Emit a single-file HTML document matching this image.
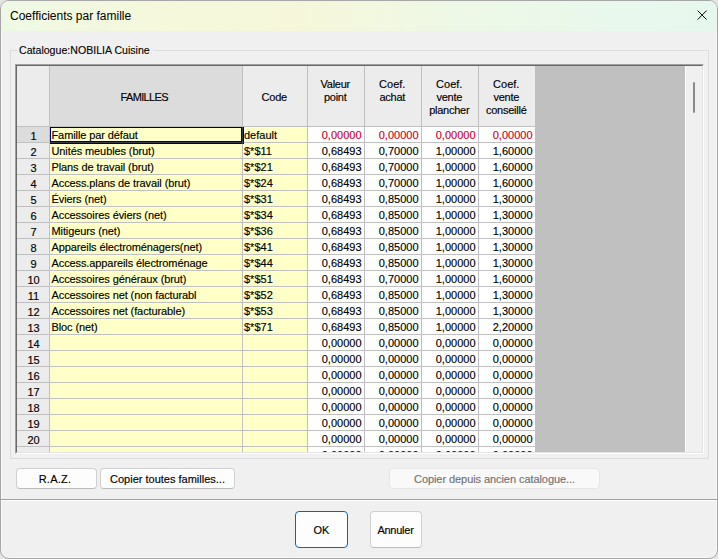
<!DOCTYPE html><html><head><meta charset="utf-8"><style>
*{margin:0;padding:0;box-sizing:border-box}
html,body{width:718px;height:559px;overflow:hidden;background:#e4e4e4}
body{font-family:"Liberation Sans",sans-serif;position:relative}
.a{position:absolute}
.win{left:0;top:0;width:718px;height:559px;border:1px solid #a6a6a6;border-radius:9px;background:#f0f0f0;overflow:hidden;box-shadow:inset 0 0 0 1px #f8f8f8}
.title{left:0;top:0;width:718px;height:30px;background:linear-gradient(90deg,#eef9e4 0%,#f5f8dc 21%,#f6f7da 42%,#eef8e6 63%,#e8f8ee 90%,#e6f7ee 100%)}
.t{white-space:nowrap;line-height:1;color:#000}
.cell{font-size:11px;-webkit-text-stroke:0.15px currentColor}
</style></head><body><div class="a win">
<div class="a title"></div>
</div>
<div class="a t" style="left:10px;top:10px;font-size:12px">Coefficients par famille</div>
<svg class="a" style="left:696px;top:9px" width="12" height="12" viewBox="0 0 12 12"><path d="M1.6 1.6L10.6 10.6M10.6 1.6L1.6 10.6" stroke="#000" stroke-width="1"/></svg>
<div class="a" style="left:10px;top:50px;width:699px;height:409px;border:1px solid #dcdcdc"></div>
<div class="a t" style="left:17px;top:45px;padding:0 3px 0 2px;background:#f0f0f0;font-size:10.6px;-webkit-text-stroke:0.12px #000">Catalogue:NOBILIA Cuisine</div>
<div class="a" style="left:15px;top:64px;width:689px;height:390px;border-left:1px solid #a0a0a0;border-top:1px solid #a0a0a0;border-right:1px solid #fff;border-bottom:1px solid #fff"></div>
<div class="a" style="left:16px;top:65px;width:687px;height:388px;border-left:1px solid #696969;border-top:1px solid #696969;border-right:1px solid #e3e3e3;border-bottom:1px solid #e3e3e3;background:#c0c0c0;overflow:hidden">
<div class="a" style="left:0px;top:0px;width:32px;height:60px;background:#ececec"></div>
<div class="a" style="left:32px;top:0px;width:1px;height:386px;background:#c0c0c0"></div>
<div class="a" style="left:33px;top:0px;width:192px;height:60px;background:#dcdcdc"></div>
<div class="a" style="left:225px;top:0px;width:1px;height:386px;background:#c0c0c0"></div>
<div class="a" style="left:226px;top:0px;width:64px;height:60px;background:#ececec"></div>
<div class="a" style="left:290px;top:0px;width:1px;height:386px;background:#c0c0c0"></div>
<div class="a" style="left:291px;top:0px;width:56px;height:60px;background:#ececec"></div>
<div class="a" style="left:347px;top:0px;width:1px;height:386px;background:#c0c0c0"></div>
<div class="a" style="left:348px;top:0px;width:56px;height:60px;background:#ececec"></div>
<div class="a" style="left:404px;top:0px;width:1px;height:386px;background:#c0c0c0"></div>
<div class="a" style="left:405px;top:0px;width:56px;height:60px;background:#ececec"></div>
<div class="a" style="left:461px;top:0px;width:1px;height:386px;background:#c0c0c0"></div>
<div class="a" style="left:462px;top:0px;width:56px;height:60px;background:#ececec"></div>
<div class="a" style="left:518px;top:0px;width:1px;height:386px;background:#c0c0c0"></div>
<div class="a" style="left:0px;top:60px;width:518px;height:1px;background:#c0c0c0"></div>
<div class="a" style="left:0px;top:61px;width:32px;height:15px;background:#dcdcdc"></div>
<div class="a" style="left:33px;top:61px;width:192px;height:15px;background:#ffffc8"></div>
<div class="a" style="left:226px;top:61px;width:64px;height:15px;background:#ffffc8"></div>
<div class="a" style="left:291px;top:61px;width:56px;height:15px;background:#ffffff"></div>
<div class="a" style="left:348px;top:61px;width:56px;height:15px;background:#ffffff"></div>
<div class="a" style="left:405px;top:61px;width:56px;height:15px;background:#ffffff"></div>
<div class="a" style="left:462px;top:61px;width:56px;height:15px;background:#ffffff"></div>
<div class="a" style="left:0px;top:76px;width:518px;height:1px;background:#c0c0c0"></div>
<div class="a" style="left:0px;top:77px;width:32px;height:15px;background:#ececec"></div>
<div class="a" style="left:33px;top:77px;width:192px;height:15px;background:#ffffc8"></div>
<div class="a" style="left:226px;top:77px;width:64px;height:15px;background:#ffffc8"></div>
<div class="a" style="left:291px;top:77px;width:56px;height:15px;background:#ffffff"></div>
<div class="a" style="left:348px;top:77px;width:56px;height:15px;background:#ffffff"></div>
<div class="a" style="left:405px;top:77px;width:56px;height:15px;background:#ffffff"></div>
<div class="a" style="left:462px;top:77px;width:56px;height:15px;background:#ffffff"></div>
<div class="a" style="left:0px;top:92px;width:518px;height:1px;background:#c0c0c0"></div>
<div class="a" style="left:0px;top:93px;width:32px;height:15px;background:#ececec"></div>
<div class="a" style="left:33px;top:93px;width:192px;height:15px;background:#ffffc8"></div>
<div class="a" style="left:226px;top:93px;width:64px;height:15px;background:#ffffc8"></div>
<div class="a" style="left:291px;top:93px;width:56px;height:15px;background:#ffffff"></div>
<div class="a" style="left:348px;top:93px;width:56px;height:15px;background:#ffffff"></div>
<div class="a" style="left:405px;top:93px;width:56px;height:15px;background:#ffffff"></div>
<div class="a" style="left:462px;top:93px;width:56px;height:15px;background:#ffffff"></div>
<div class="a" style="left:0px;top:108px;width:518px;height:1px;background:#c0c0c0"></div>
<div class="a" style="left:0px;top:109px;width:32px;height:15px;background:#ececec"></div>
<div class="a" style="left:33px;top:109px;width:192px;height:15px;background:#ffffc8"></div>
<div class="a" style="left:226px;top:109px;width:64px;height:15px;background:#ffffc8"></div>
<div class="a" style="left:291px;top:109px;width:56px;height:15px;background:#ffffff"></div>
<div class="a" style="left:348px;top:109px;width:56px;height:15px;background:#ffffff"></div>
<div class="a" style="left:405px;top:109px;width:56px;height:15px;background:#ffffff"></div>
<div class="a" style="left:462px;top:109px;width:56px;height:15px;background:#ffffff"></div>
<div class="a" style="left:0px;top:124px;width:518px;height:1px;background:#c0c0c0"></div>
<div class="a" style="left:0px;top:125px;width:32px;height:15px;background:#ececec"></div>
<div class="a" style="left:33px;top:125px;width:192px;height:15px;background:#ffffc8"></div>
<div class="a" style="left:226px;top:125px;width:64px;height:15px;background:#ffffc8"></div>
<div class="a" style="left:291px;top:125px;width:56px;height:15px;background:#ffffff"></div>
<div class="a" style="left:348px;top:125px;width:56px;height:15px;background:#ffffff"></div>
<div class="a" style="left:405px;top:125px;width:56px;height:15px;background:#ffffff"></div>
<div class="a" style="left:462px;top:125px;width:56px;height:15px;background:#ffffff"></div>
<div class="a" style="left:0px;top:140px;width:518px;height:1px;background:#c0c0c0"></div>
<div class="a" style="left:0px;top:141px;width:32px;height:15px;background:#ececec"></div>
<div class="a" style="left:33px;top:141px;width:192px;height:15px;background:#ffffc8"></div>
<div class="a" style="left:226px;top:141px;width:64px;height:15px;background:#ffffc8"></div>
<div class="a" style="left:291px;top:141px;width:56px;height:15px;background:#ffffff"></div>
<div class="a" style="left:348px;top:141px;width:56px;height:15px;background:#ffffff"></div>
<div class="a" style="left:405px;top:141px;width:56px;height:15px;background:#ffffff"></div>
<div class="a" style="left:462px;top:141px;width:56px;height:15px;background:#ffffff"></div>
<div class="a" style="left:0px;top:156px;width:518px;height:1px;background:#c0c0c0"></div>
<div class="a" style="left:0px;top:157px;width:32px;height:15px;background:#ececec"></div>
<div class="a" style="left:33px;top:157px;width:192px;height:15px;background:#ffffc8"></div>
<div class="a" style="left:226px;top:157px;width:64px;height:15px;background:#ffffc8"></div>
<div class="a" style="left:291px;top:157px;width:56px;height:15px;background:#ffffff"></div>
<div class="a" style="left:348px;top:157px;width:56px;height:15px;background:#ffffff"></div>
<div class="a" style="left:405px;top:157px;width:56px;height:15px;background:#ffffff"></div>
<div class="a" style="left:462px;top:157px;width:56px;height:15px;background:#ffffff"></div>
<div class="a" style="left:0px;top:172px;width:518px;height:1px;background:#c0c0c0"></div>
<div class="a" style="left:0px;top:173px;width:32px;height:15px;background:#ececec"></div>
<div class="a" style="left:33px;top:173px;width:192px;height:15px;background:#ffffc8"></div>
<div class="a" style="left:226px;top:173px;width:64px;height:15px;background:#ffffc8"></div>
<div class="a" style="left:291px;top:173px;width:56px;height:15px;background:#ffffff"></div>
<div class="a" style="left:348px;top:173px;width:56px;height:15px;background:#ffffff"></div>
<div class="a" style="left:405px;top:173px;width:56px;height:15px;background:#ffffff"></div>
<div class="a" style="left:462px;top:173px;width:56px;height:15px;background:#ffffff"></div>
<div class="a" style="left:0px;top:188px;width:518px;height:1px;background:#c0c0c0"></div>
<div class="a" style="left:0px;top:189px;width:32px;height:15px;background:#ececec"></div>
<div class="a" style="left:33px;top:189px;width:192px;height:15px;background:#ffffc8"></div>
<div class="a" style="left:226px;top:189px;width:64px;height:15px;background:#ffffc8"></div>
<div class="a" style="left:291px;top:189px;width:56px;height:15px;background:#ffffff"></div>
<div class="a" style="left:348px;top:189px;width:56px;height:15px;background:#ffffff"></div>
<div class="a" style="left:405px;top:189px;width:56px;height:15px;background:#ffffff"></div>
<div class="a" style="left:462px;top:189px;width:56px;height:15px;background:#ffffff"></div>
<div class="a" style="left:0px;top:204px;width:518px;height:1px;background:#c0c0c0"></div>
<div class="a" style="left:0px;top:205px;width:32px;height:15px;background:#ececec"></div>
<div class="a" style="left:33px;top:205px;width:192px;height:15px;background:#ffffc8"></div>
<div class="a" style="left:226px;top:205px;width:64px;height:15px;background:#ffffc8"></div>
<div class="a" style="left:291px;top:205px;width:56px;height:15px;background:#ffffff"></div>
<div class="a" style="left:348px;top:205px;width:56px;height:15px;background:#ffffff"></div>
<div class="a" style="left:405px;top:205px;width:56px;height:15px;background:#ffffff"></div>
<div class="a" style="left:462px;top:205px;width:56px;height:15px;background:#ffffff"></div>
<div class="a" style="left:0px;top:220px;width:518px;height:1px;background:#c0c0c0"></div>
<div class="a" style="left:0px;top:221px;width:32px;height:15px;background:#ececec"></div>
<div class="a" style="left:33px;top:221px;width:192px;height:15px;background:#ffffc8"></div>
<div class="a" style="left:226px;top:221px;width:64px;height:15px;background:#ffffc8"></div>
<div class="a" style="left:291px;top:221px;width:56px;height:15px;background:#ffffff"></div>
<div class="a" style="left:348px;top:221px;width:56px;height:15px;background:#ffffff"></div>
<div class="a" style="left:405px;top:221px;width:56px;height:15px;background:#ffffff"></div>
<div class="a" style="left:462px;top:221px;width:56px;height:15px;background:#ffffff"></div>
<div class="a" style="left:0px;top:236px;width:518px;height:1px;background:#c0c0c0"></div>
<div class="a" style="left:0px;top:237px;width:32px;height:15px;background:#ececec"></div>
<div class="a" style="left:33px;top:237px;width:192px;height:15px;background:#ffffc8"></div>
<div class="a" style="left:226px;top:237px;width:64px;height:15px;background:#ffffc8"></div>
<div class="a" style="left:291px;top:237px;width:56px;height:15px;background:#ffffff"></div>
<div class="a" style="left:348px;top:237px;width:56px;height:15px;background:#ffffff"></div>
<div class="a" style="left:405px;top:237px;width:56px;height:15px;background:#ffffff"></div>
<div class="a" style="left:462px;top:237px;width:56px;height:15px;background:#ffffff"></div>
<div class="a" style="left:0px;top:252px;width:518px;height:1px;background:#c0c0c0"></div>
<div class="a" style="left:0px;top:253px;width:32px;height:15px;background:#ececec"></div>
<div class="a" style="left:33px;top:253px;width:192px;height:15px;background:#ffffc8"></div>
<div class="a" style="left:226px;top:253px;width:64px;height:15px;background:#ffffc8"></div>
<div class="a" style="left:291px;top:253px;width:56px;height:15px;background:#ffffff"></div>
<div class="a" style="left:348px;top:253px;width:56px;height:15px;background:#ffffff"></div>
<div class="a" style="left:405px;top:253px;width:56px;height:15px;background:#ffffff"></div>
<div class="a" style="left:462px;top:253px;width:56px;height:15px;background:#ffffff"></div>
<div class="a" style="left:0px;top:268px;width:518px;height:1px;background:#c0c0c0"></div>
<div class="a" style="left:0px;top:269px;width:32px;height:15px;background:#ececec"></div>
<div class="a" style="left:33px;top:269px;width:192px;height:15px;background:#ffffc8"></div>
<div class="a" style="left:226px;top:269px;width:64px;height:15px;background:#ffffc8"></div>
<div class="a" style="left:291px;top:269px;width:56px;height:15px;background:#ffffff"></div>
<div class="a" style="left:348px;top:269px;width:56px;height:15px;background:#ffffff"></div>
<div class="a" style="left:405px;top:269px;width:56px;height:15px;background:#ffffff"></div>
<div class="a" style="left:462px;top:269px;width:56px;height:15px;background:#ffffff"></div>
<div class="a" style="left:0px;top:284px;width:518px;height:1px;background:#c0c0c0"></div>
<div class="a" style="left:0px;top:285px;width:32px;height:15px;background:#ececec"></div>
<div class="a" style="left:33px;top:285px;width:192px;height:15px;background:#ffffc8"></div>
<div class="a" style="left:226px;top:285px;width:64px;height:15px;background:#ffffc8"></div>
<div class="a" style="left:291px;top:285px;width:56px;height:15px;background:#ffffff"></div>
<div class="a" style="left:348px;top:285px;width:56px;height:15px;background:#ffffff"></div>
<div class="a" style="left:405px;top:285px;width:56px;height:15px;background:#ffffff"></div>
<div class="a" style="left:462px;top:285px;width:56px;height:15px;background:#ffffff"></div>
<div class="a" style="left:0px;top:300px;width:518px;height:1px;background:#c0c0c0"></div>
<div class="a" style="left:0px;top:301px;width:32px;height:15px;background:#ececec"></div>
<div class="a" style="left:33px;top:301px;width:192px;height:15px;background:#ffffc8"></div>
<div class="a" style="left:226px;top:301px;width:64px;height:15px;background:#ffffc8"></div>
<div class="a" style="left:291px;top:301px;width:56px;height:15px;background:#ffffff"></div>
<div class="a" style="left:348px;top:301px;width:56px;height:15px;background:#ffffff"></div>
<div class="a" style="left:405px;top:301px;width:56px;height:15px;background:#ffffff"></div>
<div class="a" style="left:462px;top:301px;width:56px;height:15px;background:#ffffff"></div>
<div class="a" style="left:0px;top:316px;width:518px;height:1px;background:#c0c0c0"></div>
<div class="a" style="left:0px;top:317px;width:32px;height:15px;background:#ececec"></div>
<div class="a" style="left:33px;top:317px;width:192px;height:15px;background:#ffffc8"></div>
<div class="a" style="left:226px;top:317px;width:64px;height:15px;background:#ffffc8"></div>
<div class="a" style="left:291px;top:317px;width:56px;height:15px;background:#ffffff"></div>
<div class="a" style="left:348px;top:317px;width:56px;height:15px;background:#ffffff"></div>
<div class="a" style="left:405px;top:317px;width:56px;height:15px;background:#ffffff"></div>
<div class="a" style="left:462px;top:317px;width:56px;height:15px;background:#ffffff"></div>
<div class="a" style="left:0px;top:332px;width:518px;height:1px;background:#c0c0c0"></div>
<div class="a" style="left:0px;top:333px;width:32px;height:15px;background:#ececec"></div>
<div class="a" style="left:33px;top:333px;width:192px;height:15px;background:#ffffc8"></div>
<div class="a" style="left:226px;top:333px;width:64px;height:15px;background:#ffffc8"></div>
<div class="a" style="left:291px;top:333px;width:56px;height:15px;background:#ffffff"></div>
<div class="a" style="left:348px;top:333px;width:56px;height:15px;background:#ffffff"></div>
<div class="a" style="left:405px;top:333px;width:56px;height:15px;background:#ffffff"></div>
<div class="a" style="left:462px;top:333px;width:56px;height:15px;background:#ffffff"></div>
<div class="a" style="left:0px;top:348px;width:518px;height:1px;background:#c0c0c0"></div>
<div class="a" style="left:0px;top:349px;width:32px;height:15px;background:#ececec"></div>
<div class="a" style="left:33px;top:349px;width:192px;height:15px;background:#ffffc8"></div>
<div class="a" style="left:226px;top:349px;width:64px;height:15px;background:#ffffc8"></div>
<div class="a" style="left:291px;top:349px;width:56px;height:15px;background:#ffffff"></div>
<div class="a" style="left:348px;top:349px;width:56px;height:15px;background:#ffffff"></div>
<div class="a" style="left:405px;top:349px;width:56px;height:15px;background:#ffffff"></div>
<div class="a" style="left:462px;top:349px;width:56px;height:15px;background:#ffffff"></div>
<div class="a" style="left:0px;top:364px;width:518px;height:1px;background:#c0c0c0"></div>
<div class="a" style="left:0px;top:365px;width:32px;height:15px;background:#ececec"></div>
<div class="a" style="left:33px;top:365px;width:192px;height:15px;background:#ffffc8"></div>
<div class="a" style="left:226px;top:365px;width:64px;height:15px;background:#ffffc8"></div>
<div class="a" style="left:291px;top:365px;width:56px;height:15px;background:#ffffff"></div>
<div class="a" style="left:348px;top:365px;width:56px;height:15px;background:#ffffff"></div>
<div class="a" style="left:405px;top:365px;width:56px;height:15px;background:#ffffff"></div>
<div class="a" style="left:462px;top:365px;width:56px;height:15px;background:#ffffff"></div>
<div class="a" style="left:0px;top:380px;width:518px;height:1px;background:#c0c0c0"></div>
<div class="a" style="left:0px;top:381px;width:32px;height:15px;background:#ececec"></div>
<div class="a" style="left:33px;top:381px;width:192px;height:15px;background:#ffffc8"></div>
<div class="a" style="left:226px;top:381px;width:64px;height:15px;background:#ffffc8"></div>
<div class="a" style="left:291px;top:381px;width:56px;height:15px;background:#ffffff"></div>
<div class="a" style="left:348px;top:381px;width:56px;height:15px;background:#ffffff"></div>
<div class="a" style="left:405px;top:381px;width:56px;height:15px;background:#ffffff"></div>
<div class="a" style="left:462px;top:381px;width:56px;height:15px;background:#ffffff"></div>
<div class="a" style="left:0px;top:396px;width:518px;height:1px;background:#c0c0c0"></div>
<div class="a t cell" style="left:0.5px;width:32px;text-align:center;top:65px">1</div>
<div class="a t cell" style="left:34.5px;top:64px;letter-spacing:-0.1px">Famille par défaut</div>
<div class="a t cell" style="left:227px;top:64px;">default</div>
<div class="a t cell" style="left:291px;width:53.5px;text-align:right;top:64px;color:#c8002a">0,00000</div>
<div class="a t cell" style="left:348px;width:53.5px;text-align:right;top:64px;color:#c8002a">0,00000</div>
<div class="a t cell" style="left:405px;width:53.5px;text-align:right;top:64px;color:#c8002a">0,00000</div>
<div class="a t cell" style="left:462px;width:53.5px;text-align:right;top:64px;color:#c8002a">0,00000</div>
<div class="a t cell" style="left:0.5px;width:32px;text-align:center;top:81px">2</div>
<div class="a t cell" style="left:34.5px;top:80px;letter-spacing:-0.1px">Unités meubles (brut)</div>
<div class="a t cell" style="left:227px;top:80px;">$*$11</div>
<div class="a t cell" style="left:291px;width:53.5px;text-align:right;top:80px;color:#000">0,68493</div>
<div class="a t cell" style="left:348px;width:53.5px;text-align:right;top:80px;color:#000">0,70000</div>
<div class="a t cell" style="left:405px;width:53.5px;text-align:right;top:80px;color:#000">1,00000</div>
<div class="a t cell" style="left:462px;width:53.5px;text-align:right;top:80px;color:#000">1,60000</div>
<div class="a t cell" style="left:0.5px;width:32px;text-align:center;top:97px">3</div>
<div class="a t cell" style="left:34.5px;top:96px;letter-spacing:-0.1px">Plans de travail (brut)</div>
<div class="a t cell" style="left:227px;top:96px;">$*$21</div>
<div class="a t cell" style="left:291px;width:53.5px;text-align:right;top:96px;color:#000">0,68493</div>
<div class="a t cell" style="left:348px;width:53.5px;text-align:right;top:96px;color:#000">0,70000</div>
<div class="a t cell" style="left:405px;width:53.5px;text-align:right;top:96px;color:#000">1,00000</div>
<div class="a t cell" style="left:462px;width:53.5px;text-align:right;top:96px;color:#000">1,60000</div>
<div class="a t cell" style="left:0.5px;width:32px;text-align:center;top:113px">4</div>
<div class="a t cell" style="left:34.5px;top:112px;letter-spacing:-0.1px">Access.plans de travail (brut)</div>
<div class="a t cell" style="left:227px;top:112px;">$*$24</div>
<div class="a t cell" style="left:291px;width:53.5px;text-align:right;top:112px;color:#000">0,68493</div>
<div class="a t cell" style="left:348px;width:53.5px;text-align:right;top:112px;color:#000">0,70000</div>
<div class="a t cell" style="left:405px;width:53.5px;text-align:right;top:112px;color:#000">1,00000</div>
<div class="a t cell" style="left:462px;width:53.5px;text-align:right;top:112px;color:#000">1,60000</div>
<div class="a t cell" style="left:0.5px;width:32px;text-align:center;top:129px">5</div>
<div class="a t cell" style="left:34.5px;top:128px;letter-spacing:-0.1px">Éviers (net)</div>
<div class="a t cell" style="left:227px;top:128px;">$*$31</div>
<div class="a t cell" style="left:291px;width:53.5px;text-align:right;top:128px;color:#000">0,68493</div>
<div class="a t cell" style="left:348px;width:53.5px;text-align:right;top:128px;color:#000">0,85000</div>
<div class="a t cell" style="left:405px;width:53.5px;text-align:right;top:128px;color:#000">1,00000</div>
<div class="a t cell" style="left:462px;width:53.5px;text-align:right;top:128px;color:#000">1,30000</div>
<div class="a t cell" style="left:0.5px;width:32px;text-align:center;top:145px">6</div>
<div class="a t cell" style="left:34.5px;top:144px;letter-spacing:-0.1px">Accessoires éviers (net)</div>
<div class="a t cell" style="left:227px;top:144px;">$*$34</div>
<div class="a t cell" style="left:291px;width:53.5px;text-align:right;top:144px;color:#000">0,68493</div>
<div class="a t cell" style="left:348px;width:53.5px;text-align:right;top:144px;color:#000">0,85000</div>
<div class="a t cell" style="left:405px;width:53.5px;text-align:right;top:144px;color:#000">1,00000</div>
<div class="a t cell" style="left:462px;width:53.5px;text-align:right;top:144px;color:#000">1,30000</div>
<div class="a t cell" style="left:0.5px;width:32px;text-align:center;top:161px">7</div>
<div class="a t cell" style="left:34.5px;top:160px;letter-spacing:-0.1px">Mitigeurs (net)</div>
<div class="a t cell" style="left:227px;top:160px;">$*$36</div>
<div class="a t cell" style="left:291px;width:53.5px;text-align:right;top:160px;color:#000">0,68493</div>
<div class="a t cell" style="left:348px;width:53.5px;text-align:right;top:160px;color:#000">0,85000</div>
<div class="a t cell" style="left:405px;width:53.5px;text-align:right;top:160px;color:#000">1,00000</div>
<div class="a t cell" style="left:462px;width:53.5px;text-align:right;top:160px;color:#000">1,30000</div>
<div class="a t cell" style="left:0.5px;width:32px;text-align:center;top:177px">8</div>
<div class="a t cell" style="left:34.5px;top:176px;letter-spacing:-0.1px">Appareils électroménagers(net)</div>
<div class="a t cell" style="left:227px;top:176px;">$*$41</div>
<div class="a t cell" style="left:291px;width:53.5px;text-align:right;top:176px;color:#000">0,68493</div>
<div class="a t cell" style="left:348px;width:53.5px;text-align:right;top:176px;color:#000">0,85000</div>
<div class="a t cell" style="left:405px;width:53.5px;text-align:right;top:176px;color:#000">1,00000</div>
<div class="a t cell" style="left:462px;width:53.5px;text-align:right;top:176px;color:#000">1,30000</div>
<div class="a t cell" style="left:0.5px;width:32px;text-align:center;top:193px">9</div>
<div class="a t cell" style="left:34.5px;top:192px;letter-spacing:-0.1px">Access.appareils électroménage</div>
<div class="a t cell" style="left:227px;top:192px;">$*$44</div>
<div class="a t cell" style="left:291px;width:53.5px;text-align:right;top:192px;color:#000">0,68493</div>
<div class="a t cell" style="left:348px;width:53.5px;text-align:right;top:192px;color:#000">0,85000</div>
<div class="a t cell" style="left:405px;width:53.5px;text-align:right;top:192px;color:#000">1,00000</div>
<div class="a t cell" style="left:462px;width:53.5px;text-align:right;top:192px;color:#000">1,30000</div>
<div class="a t cell" style="left:0.5px;width:32px;text-align:center;top:209px">10</div>
<div class="a t cell" style="left:34.5px;top:208px;letter-spacing:-0.1px">Accessoires généraux (brut)</div>
<div class="a t cell" style="left:227px;top:208px;">$*$51</div>
<div class="a t cell" style="left:291px;width:53.5px;text-align:right;top:208px;color:#000">0,68493</div>
<div class="a t cell" style="left:348px;width:53.5px;text-align:right;top:208px;color:#000">0,70000</div>
<div class="a t cell" style="left:405px;width:53.5px;text-align:right;top:208px;color:#000">1,00000</div>
<div class="a t cell" style="left:462px;width:53.5px;text-align:right;top:208px;color:#000">1,60000</div>
<div class="a t cell" style="left:0.5px;width:32px;text-align:center;top:225px">11</div>
<div class="a t cell" style="left:34.5px;top:224px;letter-spacing:-0.1px">Accessoires net (non facturabl</div>
<div class="a t cell" style="left:227px;top:224px;">$*$52</div>
<div class="a t cell" style="left:291px;width:53.5px;text-align:right;top:224px;color:#000">0,68493</div>
<div class="a t cell" style="left:348px;width:53.5px;text-align:right;top:224px;color:#000">0,85000</div>
<div class="a t cell" style="left:405px;width:53.5px;text-align:right;top:224px;color:#000">1,00000</div>
<div class="a t cell" style="left:462px;width:53.5px;text-align:right;top:224px;color:#000">1,30000</div>
<div class="a t cell" style="left:0.5px;width:32px;text-align:center;top:241px">12</div>
<div class="a t cell" style="left:34.5px;top:240px;letter-spacing:-0.1px">Accessoires net (facturable)</div>
<div class="a t cell" style="left:227px;top:240px;">$*$53</div>
<div class="a t cell" style="left:291px;width:53.5px;text-align:right;top:240px;color:#000">0,68493</div>
<div class="a t cell" style="left:348px;width:53.5px;text-align:right;top:240px;color:#000">0,85000</div>
<div class="a t cell" style="left:405px;width:53.5px;text-align:right;top:240px;color:#000">1,00000</div>
<div class="a t cell" style="left:462px;width:53.5px;text-align:right;top:240px;color:#000">1,30000</div>
<div class="a t cell" style="left:0.5px;width:32px;text-align:center;top:257px">13</div>
<div class="a t cell" style="left:34.5px;top:256px;letter-spacing:-0.1px">Bloc (net)</div>
<div class="a t cell" style="left:227px;top:256px;">$*$71</div>
<div class="a t cell" style="left:291px;width:53.5px;text-align:right;top:256px;color:#000">0,68493</div>
<div class="a t cell" style="left:348px;width:53.5px;text-align:right;top:256px;color:#000">0,85000</div>
<div class="a t cell" style="left:405px;width:53.5px;text-align:right;top:256px;color:#000">1,00000</div>
<div class="a t cell" style="left:462px;width:53.5px;text-align:right;top:256px;color:#000">2,20000</div>
<div class="a t cell" style="left:0.5px;width:32px;text-align:center;top:273px">14</div>
<div class="a t cell" style="left:291px;width:53.5px;text-align:right;top:272px;color:#000">0,00000</div>
<div class="a t cell" style="left:348px;width:53.5px;text-align:right;top:272px;color:#000">0,00000</div>
<div class="a t cell" style="left:405px;width:53.5px;text-align:right;top:272px;color:#000">0,00000</div>
<div class="a t cell" style="left:462px;width:53.5px;text-align:right;top:272px;color:#000">0,00000</div>
<div class="a t cell" style="left:0.5px;width:32px;text-align:center;top:289px">15</div>
<div class="a t cell" style="left:291px;width:53.5px;text-align:right;top:288px;color:#000">0,00000</div>
<div class="a t cell" style="left:348px;width:53.5px;text-align:right;top:288px;color:#000">0,00000</div>
<div class="a t cell" style="left:405px;width:53.5px;text-align:right;top:288px;color:#000">0,00000</div>
<div class="a t cell" style="left:462px;width:53.5px;text-align:right;top:288px;color:#000">0,00000</div>
<div class="a t cell" style="left:0.5px;width:32px;text-align:center;top:305px">16</div>
<div class="a t cell" style="left:291px;width:53.5px;text-align:right;top:304px;color:#000">0,00000</div>
<div class="a t cell" style="left:348px;width:53.5px;text-align:right;top:304px;color:#000">0,00000</div>
<div class="a t cell" style="left:405px;width:53.5px;text-align:right;top:304px;color:#000">0,00000</div>
<div class="a t cell" style="left:462px;width:53.5px;text-align:right;top:304px;color:#000">0,00000</div>
<div class="a t cell" style="left:0.5px;width:32px;text-align:center;top:321px">17</div>
<div class="a t cell" style="left:291px;width:53.5px;text-align:right;top:320px;color:#000">0,00000</div>
<div class="a t cell" style="left:348px;width:53.5px;text-align:right;top:320px;color:#000">0,00000</div>
<div class="a t cell" style="left:405px;width:53.5px;text-align:right;top:320px;color:#000">0,00000</div>
<div class="a t cell" style="left:462px;width:53.5px;text-align:right;top:320px;color:#000">0,00000</div>
<div class="a t cell" style="left:0.5px;width:32px;text-align:center;top:337px">18</div>
<div class="a t cell" style="left:291px;width:53.5px;text-align:right;top:336px;color:#000">0,00000</div>
<div class="a t cell" style="left:348px;width:53.5px;text-align:right;top:336px;color:#000">0,00000</div>
<div class="a t cell" style="left:405px;width:53.5px;text-align:right;top:336px;color:#000">0,00000</div>
<div class="a t cell" style="left:462px;width:53.5px;text-align:right;top:336px;color:#000">0,00000</div>
<div class="a t cell" style="left:0.5px;width:32px;text-align:center;top:353px">19</div>
<div class="a t cell" style="left:291px;width:53.5px;text-align:right;top:352px;color:#000">0,00000</div>
<div class="a t cell" style="left:348px;width:53.5px;text-align:right;top:352px;color:#000">0,00000</div>
<div class="a t cell" style="left:405px;width:53.5px;text-align:right;top:352px;color:#000">0,00000</div>
<div class="a t cell" style="left:462px;width:53.5px;text-align:right;top:352px;color:#000">0,00000</div>
<div class="a t cell" style="left:0.5px;width:32px;text-align:center;top:369px">20</div>
<div class="a t cell" style="left:291px;width:53.5px;text-align:right;top:368px;color:#000">0,00000</div>
<div class="a t cell" style="left:348px;width:53.5px;text-align:right;top:368px;color:#000">0,00000</div>
<div class="a t cell" style="left:405px;width:53.5px;text-align:right;top:368px;color:#000">0,00000</div>
<div class="a t cell" style="left:462px;width:53.5px;text-align:right;top:368px;color:#000">0,00000</div>
<div class="a t cell" style="left:291px;width:53.5px;text-align:right;top:384px;color:#000">0,00000</div>
<div class="a t cell" style="left:348px;width:53.5px;text-align:right;top:384px;color:#000">0,00000</div>
<div class="a t cell" style="left:405px;width:53.5px;text-align:right;top:384px;color:#000">0,00000</div>
<div class="a t cell" style="left:462px;width:53.5px;text-align:right;top:384px;color:#000">0,00000</div>
<div class="a t cell" style="left:32.25px;width:192px;text-align:center;top:26px;letter-spacing:-0.25px"><span style="letter-spacing:-0.65px;margin-left:-2px">FAMILLES</span></div>
<div class="a t cell" style="left:225.25px;width:64px;text-align:center;top:26px;letter-spacing:-0.25px">Code</div>
<div class="a t cell" style="left:290.25px;width:56px;text-align:center;top:13px;letter-spacing:-0.25px">Valeur</div>
<div class="a t cell" style="left:290.25px;width:56px;text-align:center;top:26px;letter-spacing:-0.25px">point</div>
<div class="a t cell" style="left:347.25px;width:56px;text-align:center;top:13px;letter-spacing:0">Coef.</div>
<div class="a t cell" style="left:347.25px;width:56px;text-align:center;top:26px;letter-spacing:-0.25px">achat</div>
<div class="a t cell" style="left:404.25px;width:56px;text-align:center;top:13px;letter-spacing:0">Coef.</div>
<div class="a t cell" style="left:404.25px;width:56px;text-align:center;top:26px;letter-spacing:-0.25px">vente</div>
<div class="a t cell" style="left:404.25px;width:56px;text-align:center;top:39px;letter-spacing:-0.25px">plancher</div>
<div class="a t cell" style="left:461.25px;width:56px;text-align:center;top:13px;letter-spacing:0">Coef.</div>
<div class="a t cell" style="left:461.25px;width:56px;text-align:center;top:26px;letter-spacing:-0.25px">vente</div>
<div class="a t cell" style="left:461.25px;width:56px;text-align:center;top:39px;letter-spacing:-0.25px">conseillé</div>
<div class="a" style="left:33px;top:61px;width:192px;height:15px;border:1px solid #000050"></div>
<div class="a" style="left:33px;top:61px;width:194px;height:17px;border:1px solid #000050;border-left:0;border-top:0"></div>
<div class="a" style="left:225px;top:61px;width:1px;height:17px;background:#3c3c50"></div>
<div class="a" style="left:33px;top:76px;width:194px;height:1px;background:#3c3c50"></div>
<div class="a" style="left:668px;top:0px;width:17px;height:386px;background:#f0f0f0;border-left:1px solid #fff"></div>
<div class="a" style="left:676px;top:16px;width:2px;height:31px;background:#8a8a8a;border-radius:1px"></div>
</div>
<div class="a" style="left:16px;top:468px;width:81px;height:21px;border:1px solid #d0d0d0;border-bottom-color:#bcbcbc;border-radius:4px;background:#fdfdfd;"></div>
<div class="a t" style="left:16px;top:468px;width:81px;height:21px;line-height:23px;text-align:center;font-size:11px;color:#000;-webkit-text-stroke:0.15px currentColor"><span style="letter-spacing:0.25px;margin-left:-3px">R.A.Z.</span></div>
<div class="a" style="left:100px;top:468px;width:135px;height:21px;border:1px solid #d0d0d0;border-bottom-color:#bcbcbc;border-radius:4px;background:#fdfdfd;"></div>
<div class="a t" style="left:100px;top:468px;width:135px;height:21px;line-height:23px;text-align:center;font-size:11px;color:#000;-webkit-text-stroke:0.15px currentColor">Copier toutes familles...</div>
<div class="a" style="left:389px;top:468px;width:211px;height:21px;border:1px solid #e6e6e6;border-bottom-color:#e6e6e6;border-radius:4px;background:#f9f9f9;"></div>
<div class="a t" style="left:389px;top:468px;width:211px;height:21px;line-height:23px;text-align:center;font-size:11px;color:#727272;-webkit-text-stroke:0.15px currentColor"><span style="letter-spacing:-0.07px">Copier depuis ancien catalogue...</span></div>
<div class="a" style="left:1px;top:499px;width:716px;height:1px;background:#a0a0a0"></div>
<div class="a" style="left:1px;top:500px;width:716px;height:1px;background:#ffffff"></div>
<div class="a" style="left:295px;top:511px;width:53px;height:37px;border:1px solid #0067c0;border-bottom-color:#0067c0;border-radius:4px;background:#fdfdfd;"></div>
<div class="a t" style="left:295px;top:511px;width:53px;height:37px;line-height:39px;text-align:center;font-size:11px;color:#000;-webkit-text-stroke:0.15px currentColor">OK</div>
<div class="a" style="left:370px;top:511px;width:52px;height:37px;border:1px solid #d0d0d0;border-bottom-color:#bcbcbc;border-radius:4px;background:#fdfdfd;"></div>
<div class="a t" style="left:370px;top:511px;width:52px;height:37px;line-height:39px;text-align:center;font-size:11px;color:#000;-webkit-text-stroke:0.15px currentColor"><span style="letter-spacing:-0.25px;margin-left:-1px">Annuler</span></div></body></html>
